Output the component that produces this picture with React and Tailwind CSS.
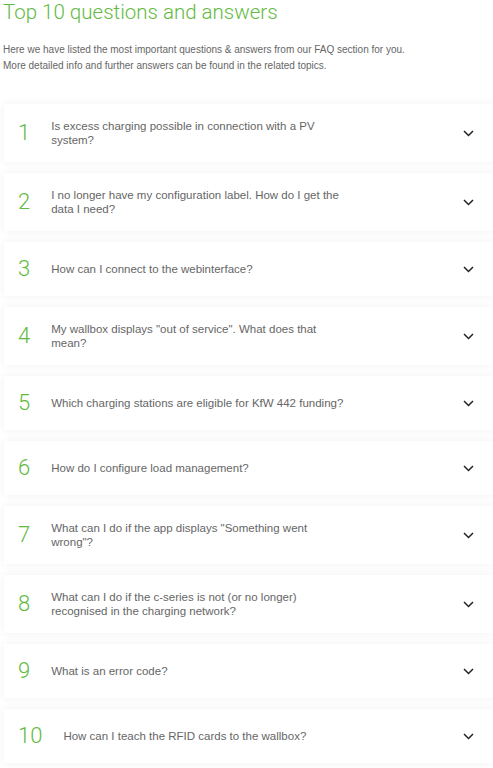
const faqs = [
  ["Is excess charging possible in connection with a PV", "system?"],
  ["I no longer have my configuration label. How do I get the", "data I need?"],
  ["How can I connect to the webinterface?"],
  ['My wallbox displays "out of service". What does that', "mean?"],
  ["Which charging stations are eligible for KfW 442 funding?"],
  ["How do I configure load management?"],
  ['What can I do if the app displays "Something went', 'wrong"?'],
  ["What can I do if the c-series is not (or no longer)", "recognised in the charging network?"],
  ["What is an error code?"],
  ["How can I teach the RFID cards to the wallbox?"],
];

function Chevron() {
  return (
    <svg width="11" height="7" viewBox="0 0 11 7" fill="none" className="shrink-0">
      <path d="M1 1l4.5 4.5L10 1" stroke="#222" strokeWidth="1.5" />
    </svg>
  );
}

export default function App() {
  return (
    <div className="min-h-screen bg-white font-['Liberation_Sans',Arial,sans-serif]">
      {/* Header */}
      <div className="pl-[3px]">
        <h1 className="font-['Roboto',sans-serif] text-[20.5px] leading-[24px] font-light text-[#62ba3f]">
          Top 10 questions and answers
        </h1>
        <p className="mt-[18px] text-[10px] leading-[16px] text-[#666]">
          Here we have listed the most important questions &amp; answers from our FAQ section for you.
          <br />
          More detailed info and further answers can be found in the related topics.
        </p>
      </div>

      {/* Questions */}
      <div className="mt-[30px] ml-[4px] flex flex-col gap-[11px]">
        {faqs.map((lines, i) => (
          <div
            key={i}
            className="flex items-center bg-white py-[15px] pl-[14px] pr-[19px] min-h-[54px] shadow-[0_0_9px_rgba(0,0,0,0.06)]"
          >
            <span className="mr-[21px] font-['Roboto',sans-serif] text-[22px] leading-[24px] font-light text-[#62ba3f]">
              {i + 1}
            </span>
            <div className="flex-1 text-[11.5px] leading-[14px] text-[#666] whitespace-nowrap">
              {lines.map((l, j) => (
                <div key={j}>{l}</div>
              ))}
            </div>
            <Chevron />
          </div>
        ))}
      </div>
    </div>
  );
}
